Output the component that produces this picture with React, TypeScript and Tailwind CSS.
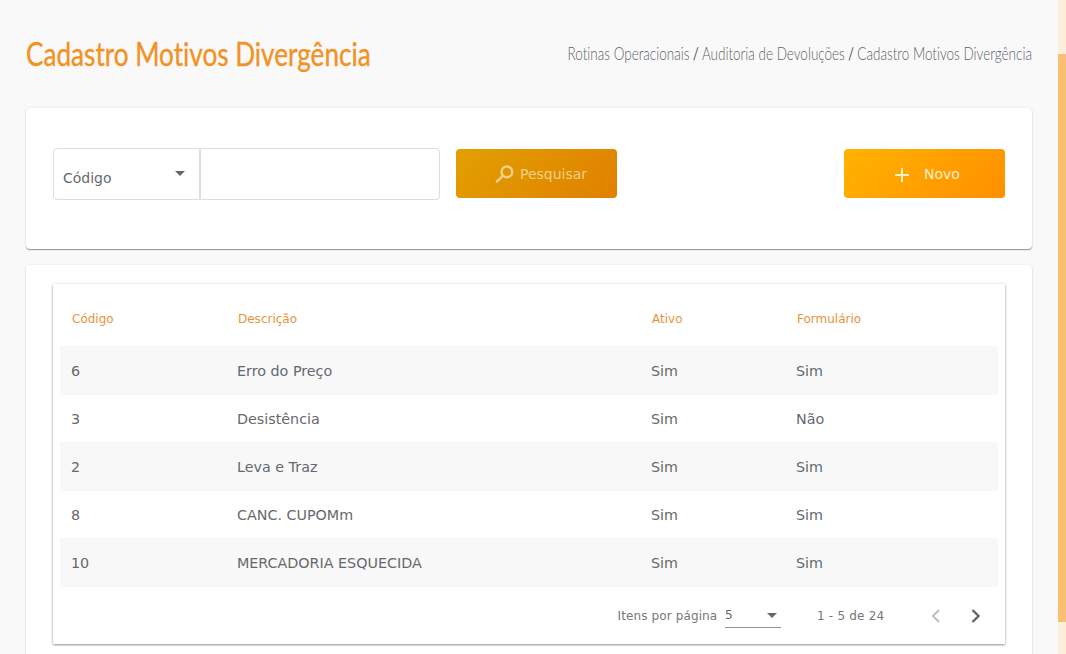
import type { ReactNode } from "react";

const columns = ["Código", "Descrição", "Ativo", "Formulário"];

const rows = [
  { codigo: 6, descricao: "Erro do Preço", ativo: "Sim", formulario: "Sim" },
  { codigo: 3, descricao: "Desistência", ativo: "Sim", formulario: "Não" },
  { codigo: 2, descricao: "Leva e Traz", ativo: "Sim", formulario: "Sim" },
  { codigo: 8, descricao: "CANC. CUPOMm", ativo: "Sim", formulario: "Sim" },
  {
    codigo: 10,
    descricao: "MERCADORIA ESQUECIDA",
    ativo: "Sim",
    formulario: "Sim",
  },
];

const rowGrid = "grid grid-cols-[166px_414px_145px_1fr] items-center pl-[11px]";

function Card({
  className,
  children,
}: {
  className: string;
  children: ReactNode;
}) {
  return (
    <section
      className={`rounded-[4px] bg-white shadow-[0_1px_1px_rgba(0,0,0,0.4),0_0_3px_rgba(0,0,0,0.07)] ${className}`}
    >
      {children}
    </section>
  );
}

function Caret() {
  return (
    <svg className="h-[5px] w-[10px] fill-[#666]" viewBox="0 0 10 5">
      <path d="M0 0h10L5 5z" />
    </svg>
  );
}

function Header() {
  return (
    <header className="flex h-[108px] items-center justify-between font-['Lato',sans-serif] [font-variant-ligatures:none]">
      <h1 className="-mt-[2px] w-[345px] origin-left scale-x-[0.78] whitespace-nowrap text-[33.5px] leading-[40px] text-[#f29224] [-webkit-text-stroke:0.4px_#f29224]">
        Cadastro Motivos Divergência
      </h1>
      <nav className="-mt-px flex origin-right scale-x-[0.794] gap-1 whitespace-nowrap text-[17px] font-light leading-6 text-[#5f6367]">
        <span>Rotinas Operacionais</span>
        <span className="font-normal">/</span>
        <span>Auditoria de Devoluções</span>
        <span className="font-normal">/</span>
        <span>Cadastro Motivos Divergência</span>
      </nav>
    </header>
  );
}

function SearchBar() {
  return (
    <Card className="flex h-[141px] items-start pl-[27px] pr-[27px] pt-10">
      <div className="flex h-[52px] w-[387px] rounded-[4px] border border-[#dedede]">
        <div className="flex w-[147px] justify-between border-r-2 border-[#dedede] pl-[9px] pr-[14px] text-[14px] text-[#666a6e]">
          <span className="pt-[19px] leading-5">Código</span>
          <span className="pt-[22px]">
            <Caret />
          </span>
        </div>
        <input className="min-w-0 flex-1 bg-transparent px-3 outline-none" />
      </div>
      <button className="ml-4 mt-px flex h-[49px] w-[161px] items-center rounded-[4px] bg-linear-[135deg] from-[#e2a000] to-[#e08000] pl-[39px] pt-px text-[14px] text-[#f3d08a]">
        <svg
          className="h-[18px] w-[19px] fill-none stroke-current stroke-[2.5]"
          viewBox="0 0 19 18"
        >
          <circle cx="11.9" cy="6.9" r="5.3" />
          <path d="M8 10.7 1.2 17.2" />
        </svg>
        <span className="ml-[6px]">Pesquisar</span>
      </button>
      <button className="ml-auto mt-px flex h-[49px] w-[161px] items-center rounded-[4px] bg-linear-[135deg] from-[#ffb300] to-[#ff8f00] pl-[51px] pt-px text-[14px] text-[#fff0cc]">
        <svg
          className="mt-[2px] h-[14px] w-[14px] fill-none stroke-current stroke-2"
          viewBox="0 0 14 14"
        >
          <path d="M7 0v14M0 7h14" />
        </svg>
        <span className="ml-[15px]">Novo</span>
      </button>
    </Card>
  );
}

function Paginator() {
  return (
    <footer className="flex h-[57px] items-center text-[12px] text-[#777]">
      <span className="ml-[557.5px] w-[107.5px] whitespace-nowrap tracking-[0.12px]">
        Itens por página
      </span>
      <div className="flex h-6 w-14 items-center justify-between border-b border-[#949494] pr-1 text-[#666]">
        5
        <Caret />
      </div>
      <span className="ml-9 w-[114px] tracking-[0.2px]">1 - 5 de 24</span>
      <svg
        className="h-[14px] w-[9px] fill-none stroke-[#bdbdbd] stroke-2"
        viewBox="0 0 9 14"
      >
        <path d="M8 1 2 7l6 6" />
      </svg>
      <svg
        className="ml-[31px] h-[14px] w-[9px] fill-none stroke-[#666] stroke-[2.4]"
        viewBox="0 0 9 14"
      >
        <path d="m1.5 1 6 6-6 6" />
      </svg>
    </footer>
  );
}

function ReasonsTable() {
  return (
    <Card className="mt-4 h-[410px] px-[27px] pt-[19px]">
      <div className="h-[360px] bg-white px-[7px] shadow-[0_1px_2px_rgba(0,0,0,0.4),0_0_3px_rgba(0,0,0,0.1)]">
        <div className={`${rowGrid} h-[62px] pt-[7px] text-[12px] text-[#e8943a]`}>
          {columns.map((column) => (
            <span key={column} className="pl-px">
              {column}
            </span>
          ))}
        </div>
        <div className="border-t border-[#f8f8f8]">
          {rows.map((row) => (
            <div
              key={row.codigo}
              className={`${rowGrid} h-12 border-b border-[#f8f8f8] pt-[3px] text-[14.3px] text-[#65696d] odd:bg-[#f8f8f8] even:bg-white`}
            >
              <span>{row.codigo}</span>
              <span>{row.descricao}</span>
              <span>{row.ativo}</span>
              <span>{row.formulario}</span>
            </div>
          ))}
        </div>
        <Paginator />
      </div>
    </Card>
  );
}

export default function App() {
  return (
    <div className="flex h-[654px] w-[1066px] overflow-hidden bg-[#f9f9f9] font-['Verdana','DejaVu_Sans',sans-serif]">
      <main className="w-[1058px] shrink-0 pl-[26px] pr-[26px]">
        <Header />
        <SearchBar />
        <ReasonsTable />
      </main>
      <aside className="w-2 bg-[#fbefdc] pt-[54px]">
        <div className="h-[568px] bg-[#fabf70]" />
      </aside>
    </div>
  );
}
